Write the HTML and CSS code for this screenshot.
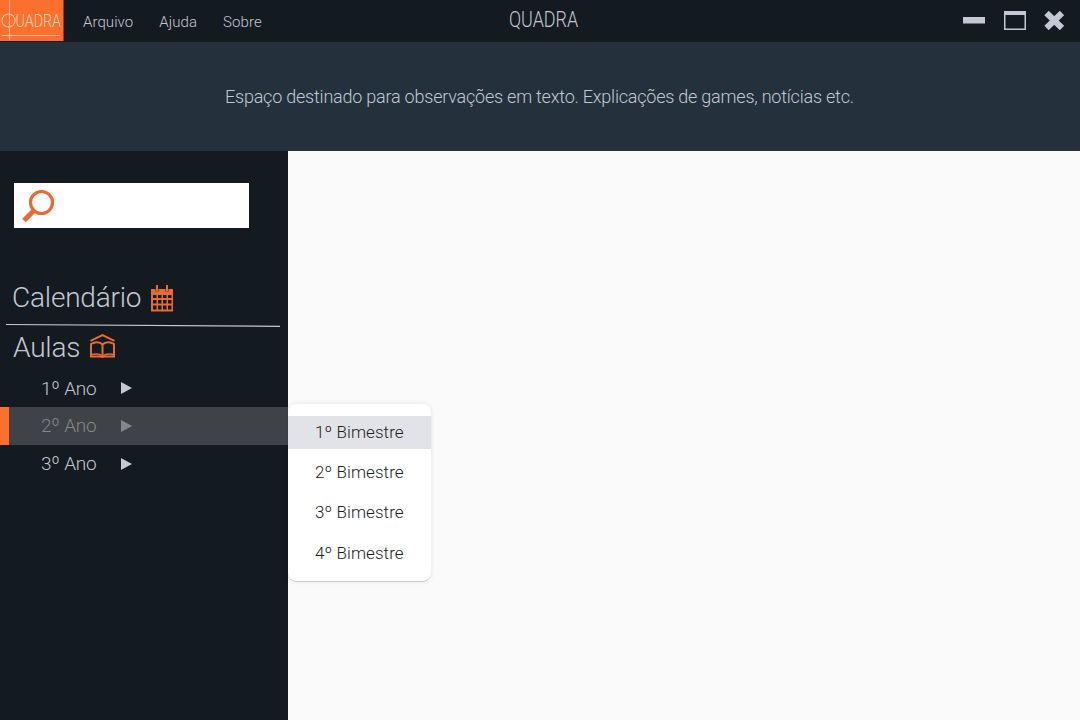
FILE: index.html
```html
<!DOCTYPE html>
<html lang="pt-BR">
<head>
<meta charset="utf-8">
<title>QUADRA</title>
<link rel="stylesheet" href="styles.css">
</head>
<body>
<div class="app">
  <header class="titlebar">
    <svg class="logo" width="64" height="41" viewBox="0 0 64 41">
      <rect width="63.500" height="41" fill="#fc6f2c"/>
      <g fill="none" stroke="#ffc9a8" stroke-width="1.100"><path d="M9.500 0V40M2 35.500H60"/><circle cx="8.500" cy="20.500" r="6.500"/></g>
      <text class="logo-text" x="15.500" y="27.200" textLength="45.500" lengthAdjust="spacingAndGlyphs">UADRA</text>
    </svg>
    <nav class="menu"><a>Arquivo</a><a>Ajuda</a><a>Sobre</a></nav>
    <h1 class="app-title"><span>QUADRA</span></h1>
    <svg class="controls" width="102" height="20" viewBox="0 0 102 20">
      <path d="M0 7H22V13.500H0Z" fill="#c3c8d2"/>
      <path d="M41 1H63V20H41ZM42.500 5V18.500H61.500V5Z" fill="#c3c8d2" fill-rule="evenodd"/>
      <path d="M83.500 3L99 18M99 3L83.500 18" stroke="#c3c8d2" stroke-width="6.200"/>
    </svg>
  </header>
  <section class="notice">Espaço destinado para observações em texto. Explicações de games, notícias etc.</section>
  <div class="body">
    <aside class="sidebar">
      <div class="search">
        <svg width="34" height="34" viewBox="0 0 34 34" fill="none" stroke="#ea6a33">
          <circle cx="20.500" cy="12.500" r="11" stroke-width="3.200"/>
          <path d="M12.500 21L3 30.500" stroke-width="5"/>
        </svg>
      </div>
      <div class="heading calendar"><span>Calendário</span>
        <svg width="22" height="27" viewBox="0 0 22 27">
          <path d="M0 4H22V26.500H0ZM2 10V13H5.500V10ZM7 10V13H10.500V10ZM12 10V13H15.500V10ZM17 10V13H20.500V10ZM2 15V18.500H5.500V15ZM7 15V18.500H10.500V15ZM12 15V18.500H15.500V15ZM17 15V18.500H20.500V15ZM2 20.500V24.500H5.500V20.500ZM7 20.500V24.500H10.500V20.500ZM12 20.500V24.500H15.500V20.500ZM17 20.500V24.500H20.500V20.500Z" fill="#e96b31" fill-rule="evenodd"/>
          <path d="M6 4V6.500M16 4V6.500" stroke="#8a4429" stroke-width="4"/>
          <path d="M6 0V6M16 0V6" stroke="#e96b31" stroke-width="2"/>
        </svg>
      </div>
      <svg class="rule" width="274" height="4" viewBox="0 0 274 4"><path d="M0 1.500L274 3.300" stroke="#c6cacd" stroke-width="1.200"/></svg>
      <div class="heading lessons"><span>Aulas</span>
        <svg width="26" height="25" viewBox="0 0 26 25" fill="none" stroke="#e96b31" stroke-width="2">
          <path d="M.5 6.800L12.500 1.200L24.500 6.800"/>
          <path d="M12.500 10.500C10 7.500 5 7.500 1 10V22.500H24V10C20.500 7.500 15.500 7.500 12.500 10.500V24"/>
          <path d="M2 20.500C6 19.500 10 20 12.500 22C15.500 20 19.500 19.500 23.500 20.500" stroke-width="1.600"/>
        </svg>
      </div>
      <ul class="years">
        <li><span>1º Ano</span><i class="arrow"></i></li>
        <li class="active"><span>2º Ano</span><i class="arrow"></i></li>
        <li><span>3º Ano</span><i class="arrow"></i></li>
      </ul>
    </aside>
    <main class="content">
      <ul class="submenu">
        <li class="selected">1º Bimestre</li>
        <li>2º Bimestre</li>
        <li>3º Bimestre</li>
        <li>4º Bimestre</li>
      </ul>
    </main>
  </div>
</div>
</body>
</html>
```
FILE: styles.css
```css
* { box-sizing: border-box; }
body { margin: 0; font-family: Roboto, "Liberation Sans", sans-serif; font-weight: 300; color: #c3c8d2; }
ul { list-style: none; margin: 0; padding: 0; }
.app { width: 1080px; height: 720px; display: flex; flex-direction: column; overflow: hidden; background: #fafafa; }
.titlebar { height: 42px; flex: none; display: flex; background: #131a20; }
.logo { display: block; flex: none; overflow: visible; }
.logo-text { font: 300 18px Roboto, sans-serif; fill: #ffd8bd; }
.menu { display: flex; gap: 26px; width: 445px; padding: 12px 0 0 19px; font-size: 15px; line-height: 20px; letter-spacing: .07px; }
.app-title { margin: 0; width: 454px; padding-top: 5px; font-size: 22.500px; line-height: 28px; font-weight: 300; }
.app-title span { display: inline-block; transform: scaleX(.795); transform-origin: 0 50%; }
.controls { margin-top: 10px; flex: none; }
.notice { height: 109px; flex: none; padding-top: 43px; padding-left: 225px; background: #24303c; font-size: 18px; line-height: 24px; letter-spacing: -.22px; white-space: nowrap; }
.body { flex: 1; display: flex; min-height: 0; }
.sidebar { width: 288px; flex: none; background: #131a20; padding-top: 32px; }
.search { width: 235px; height: 45px; margin-left: 14px; padding: 7px 0 0 7px; background: #fff; }
.search svg { display: block; }
.heading { display: flex; align-items: center; font-size: 28px; line-height: 32px; height: 32px; letter-spacing: -.2px; }
.calendar { margin-top: 54px; padding-left: 12px; gap: 10px; }
.rule { display: block; margin: 9px 0 0 6px; }
.lessons { padding-left: 13px; margin-top: 5px; gap: 9.500px; }
.lessons svg { margin-top: -4px; }
.years { margin-top: 5px; }
.years li { height: 38px; display: flex; align-items: center; padding-left: 41px; font-size: 19px; letter-spacing: -.2px; }
.years span { width: 80px; }
.years li:not(:first-child) span { margin-top: -1px; }
.arrow { border-left: 11px solid #c3c8d2; border-top: 6px solid transparent; border-bottom: 6px solid transparent; }
.years .active { background: #3f4246; color: #85878a; border-left: 9px solid #fc6f2c; padding-left: 32px; }
.active .arrow { border-left-color: #85878a; }
.content { flex: 1; padding-top: 253px; background: #fafafa; }
.submenu { width: 143px; height: 177px; padding-top: 12px; background: #fff; border-radius: 8px; box-shadow: 0 0 5px rgba(0,0,0,.1), 0 1px 0 -0.500px rgba(0,0,0,.3); color: #1c1e22; font-size: 17px; letter-spacing: .08px; }
.submenu li { height: 33px; line-height: 33px; padding-left: 27px; margin-bottom: 7.200px; white-space: nowrap; }
.submenu .selected { background: #e2e3e8; }
```
